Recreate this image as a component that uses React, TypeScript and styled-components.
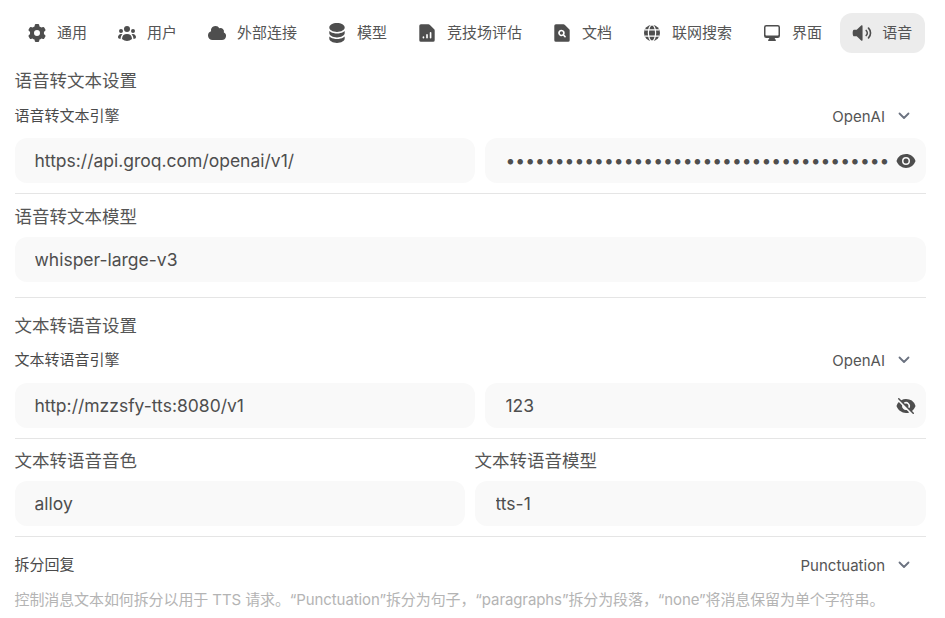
import { createGlobalStyle, styled } from "styled-components";
import {
  HiMiniCog6Tooth,
  HiMiniUserGroup,
  HiMiniCloud,
  HiMiniCircleStack,
  HiMiniDocumentChartBar,
  HiMiniDocumentMagnifyingGlass,
  HiMiniComputerDesktop,
  HiMiniSpeakerWave,
  HiMiniEye,
  HiMiniEyeSlash,
} from "react-icons/hi2";
import type { ComponentType } from "react";

const GlobeIcon = () => (
  <svg viewBox="0 0 20 20" fill="none">
    <circle cx="10" cy="10" r="8" fill="currentColor" />
    <ellipse cx="10" cy="10" rx="3.6" ry="8" stroke="#fff" strokeWidth="1.2" />
    <path d="M2.6 6.8h14.8M2.6 13.2h14.8" stroke="#fff" strokeWidth="1.2" />
  </svg>
);

const tabs: {
  label: string;
  icon: ComponentType;
  size: number;
  active?: boolean;
}[] = [
  { label: "通用", icon: HiMiniCog6Tooth, size: 20 },
  { label: "用户", icon: HiMiniUserGroup, size: 20 },
  { label: "外部连接", icon: HiMiniCloud, size: 20 },
  { label: "模型", icon: HiMiniCircleStack, size: 22 },
  { label: "竞技场评估", icon: HiMiniDocumentChartBar, size: 22 },
  { label: "文档", icon: HiMiniDocumentMagnifyingGlass, size: 22 },
  { label: "联网搜索", icon: GlobeIcon, size: 20 },
  { label: "界面", icon: HiMiniComputerDesktop, size: 20 },
  { label: "语音", icon: HiMiniSpeakerWave, size: 22, active: true },
];

const Chevron = () => (
  <ChevronIcon viewBox="0 0 20 20" fill="none">
    <path
      d="M5.5 7.5 10 12l4.5-4.5"
      stroke="#6b7280"
      strokeWidth="1.8"
      strokeLinecap="round"
      strokeLinejoin="round"
    />
  </ChevronIcon>
);

const SelectRow = ({
  label,
  value,
  top,
}: {
  label: string;
  value: string;
  top: number;
}) => (
  <Row $top={top}>
    <SmallLabel>{label}</SmallLabel>
    <Select>
      {value}
      <Chevron />
    </Select>
  </Row>
);

const App = (): JSX.Element => {
  return (
    <Page>
      <GlobalStyle />
      <Tabs>
        {tabs.map(({ label, icon: Icon, size, active }) => (
          <Tab key={label} $active={active} $iconSize={size}>
            <Icon />
            <TabLabel>{label}</TabLabel>
          </Tab>
        ))}
      </Tabs>

      <Heading $top={17}>语音转文本设置</Heading>
      <SelectRow top={13} label="语音转文本引擎" value="OpenAI" />
      <Fields $top={11}>
        <Input readOnly value="https://api.groq.com/openai/v1/" />
        <SecretField>
          <Input
            readOnly
            type="password"
            value="gsk_0000000000000000000000000000000000000000000000000000"
          />
          <EyeButton>
            <HiMiniEye />
          </EyeButton>
        </SecretField>
      </Fields>
      <Divider $top={10} />

      <Heading $top={12}>语音转文本模型</Heading>
      <SingleField $top={9}>
        <Input readOnly value="whisper-large-v3" />
      </SingleField>
      <Divider $top={15} />

      <Heading $top={17}>文本转语音设置</Heading>
      <SelectRow top={12} label="文本转语音引擎" value="OpenAI" />
      <Fields $top={12}>
        <Input readOnly value="http://mzzsfy-tts:8080/v1" />
        <SecretField>
          <Input readOnly value="123" />
          <EyeButton>
            <HiMiniEyeSlash />
          </EyeButton>
        </SecretField>
      </Fields>
      <Divider $top={10} />

      <Voices>
        <Voice>
          <Heading>文本转语音音色</Heading>
          <Input readOnly value="alloy" />
        </Voice>
        <Voice>
          <Heading>文本转语音模型</Heading>
          <Input readOnly value="tts-1" />
        </Voice>
      </Voices>
      <Divider $top={10} />

      <SelectRow top={17} label="拆分回复" value="Punctuation" />
      <Hint>
        控制消息文本如何拆分以用于 TTS 请求。“Punctuation”拆分为句子，“paragraphs”拆分为段落，“none”将消息保留为单个字符串。
      </Hint>
    </Page>
  );
};

export default App;

const GlobalStyle = createGlobalStyle`
  html, body {
    margin: 0;
    background: #ffffff;
  }
  * {
    box-sizing: border-box;
  }
`;

const Page = styled.div`
  width: 945px;
  height: 618px;
  overflow: hidden;
  padding: 13px 19px 0 15px;
  font-family: Inter, "Noto Sans CJK SC", sans-serif;
  color: #555555;
`;

const Tabs = styled.div`
  display: flex;
  gap: 5px;
  margin-left: -0.5px;
`;

const Tab = styled.div<{ $active?: boolean; $iconSize: number }>`
  display: flex;
  align-items: center;
  gap: 10px;
  height: 40px;
  padding: 0 12.5px;
  border-radius: 12px;
  font-size: 15px;
  color: #555555;
  background: ${(props) => (props.$active ? "#ececec" : "transparent")};

  svg {
    width: ${(props) => props.$iconSize}px;
    height: ${(props) => props.$iconSize}px;
    margin: 0 ${(props) => (20 - props.$iconSize) / 2}px;
    flex: none;
    color: #4e4e4e;
  }
`;

const TabLabel = styled.span`
  line-height: 20px;
  margin-bottom: 1px;
`;

const Heading = styled.div<{ $top?: number }>`
  margin-top: ${(props) => props.$top ?? 0}px;
  margin-left: -0.5px;
  font-size: 17.5px;
  line-height: 22px;
  color: #555555;
`;

const Row = styled.div<{ $top: number }>`
  display: flex;
  align-items: center;
  justify-content: space-between;
  height: 22px;
  margin-top: ${(props) => props.$top}px;
`;

const SmallLabel = styled.div`
  margin-left: -0.5px;
  margin-bottom: 4px;
  font-size: 15px;
  color: #4a4a4a;
`;

const Select = styled.div`
  display: flex;
  align-items: center;
  gap: 9px;
  padding-right: 12px;
  font-size: 15px;
  color: #555555;
`;

const ChevronIcon = styled.svg`
  width: 20px;
  height: 20px;
`;

const Fields = styled.div<{ $top: number }>`
  display: grid;
  grid-template-columns: 460px 1fr;
  gap: 10px;
  margin-top: ${(props) => props.$top}px;
`;

const SingleField = styled.div<{ $top: number }>`
  margin-top: ${(props) => props.$top}px;
`;

const Input = styled.input`
  display: block;
  width: 100%;
  height: 45px;
  padding: 0 19.5px;
  border: none;
  outline: none;
  border-radius: 12px;
  background: #f9f9f9;
  font-family: inherit;
  font-size: 17.5px;
  color: #4e4e4e;
`;

const SecretField = styled.div`
  position: relative;
  min-width: 0;

  ${Input} {
    padding-left: 20.5px;
    padding-right: 38px;
  }
`;

const EyeButton = styled.div`
  position: absolute;
  top: 12.5px;
  right: 10px;
  width: 20px;
  height: 20px;
  color: #4e4e4e;

  svg {
    display: block;
    width: 20px;
    height: 20px;
  }
`;

const Divider = styled.hr<{ $top: number }>`
  margin: ${(props) => props.$top}px 0 0;
  border: none;
  border-top: 1px solid #e5e5e5;
`;

const Voices = styled.div`
  display: grid;
  grid-template-columns: 450px 1fr;
  gap: 10px;
  margin-top: 11px;
`;

const Voice = styled.div`
  display: flex;
  flex-direction: column;
  gap: 9px;

  & + & ${Input} {
    padding-left: 20.5px;
  }
`;

const Hint = styled.div`
  margin-top: 14px;
  margin-left: -0.5px;
  font-size: 15px;
  line-height: 20px;
  letter-spacing: -0.1px;
  white-space: nowrap;
  color: #b4b4b4;
`;
